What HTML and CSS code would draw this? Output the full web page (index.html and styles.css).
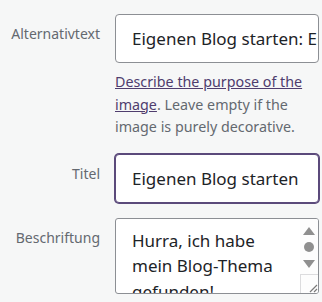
FILE: index.html
```html
<!DOCTYPE html>
<html lang="de">
<head>
  <meta charset="UTF-8">
  <title>Bild-Details</title>
  <link rel="stylesheet" href="styles.css">
</head>
<body>

  <div class="settings">
    <div class="row">
      <label class="label">Alternativtext</label>
      <div class="field">
        <div class="text-input">Eigenen Blog starten: Ein neuer Anfang</div>
        <p class="help">
          <a href="#">Describe the purpose of the image</a>. Leave empty if the image is purely decorative.
        </p>
      </div>
    </div>

    <div class="row">
      <label class="label">Titel</label>
      <div class="field">
        <div class="text-input focused">Eigenen Blog starten</div>
      </div>
    </div>

    <div class="row">
      <label class="label">Beschriftung</label>
      <div class="field">
        <div class="textarea">
          <div class="textarea-content">Hurra, ich habe mein Blog-Thema gefunden!</div>
          <div class="scrollbar">
            <span class="arrow-up"></span>
            <span class="thumb"></span>
            <span class="arrow-down"></span>
            <span class="grip">
              <svg width="10" height="10" viewBox="0 0 10 10">
                <path d="M2 9 L9 2 M6 9 L9 6" stroke="#7a7a7a" stroke-width="1.2" fill="none"/>
              </svg>
            </span>
          </div>
        </div>
      </div>
    </div>
  </div>

</body>
</html>
```

FILE: styles.css
```css
body {
  margin: 0;
  background-color: #f6f7f7;
  font-family: "Noto Sans", "Open Sans", sans-serif;
  color: #1d2327;
  overflow: hidden;
}

.settings {
  padding-top: 14px;
}

.row {
  display: grid;
  grid-template-columns: 100px 204px;
  column-gap: 15px;
  margin-bottom: 15px;
}

.label {
  text-align: right;
  color: #646970;
  font-size: 14px;
  line-height: 20px;
  padding-top: 10px;
}

.text-input {
  height: 47px;
  line-height: 47px;
  border: 1px solid #8c8f94;
  border-radius: 4px;
  background-color: white;
  padding: 0 16px;
  font-size: 17px;
  white-space: nowrap;
  overflow: hidden;
}

.text-input.focused {
  border-color: #5b4a7b;
  box-shadow: 0 0 0 1px #5b4a7b;
}

.help {
  margin: 8px 0 0;
  font-size: 14.3px;
  line-height: 22.5px;
  color: #646970;
}

.help a {
  color: #4f3d6e;
}

.textarea {
  display: flex;
  height: 74px;
  border: 1px solid #8c8f94;
  border-radius: 3px;
  background-color: white;
  overflow: hidden;
}

.textarea-content {
  flex: 1;
  padding: 9px 12px 0 16px;
  font-size: 17px;
  line-height: 25.5px;
}

.scrollbar {
  width: 18px;
  display: flex;
  flex-direction: column;
  align-items: center;
  background-color: #fdfdfd;
}

.arrow-up {
  margin-top: 8px;
  width: 0;
  height: 0;
  border-left: 6.5px solid transparent;
  border-right: 6.5px solid transparent;
  border-bottom: 8px solid #8f8f8f;
}

.thumb {
  margin-top: 7px;
  width: 10px;
  height: 10px;
  border-radius: 50%;
  background-color: #8f8f8f;
}

.arrow-down {
  margin-top: 8px;
  width: 0;
  height: 0;
  border-left: 6.5px solid transparent;
  border-right: 6.5px solid transparent;
  border-top: 8px solid #8f8f8f;
}

.grip {
  margin-top: auto;
  align-self: stretch;
  height: 18px;
  border-top: 1px solid #dcdcde;
  border-left: 1px solid #dcdcde;
  display: flex;
  align-items: flex-end;
  justify-content: flex-end;
}
```
